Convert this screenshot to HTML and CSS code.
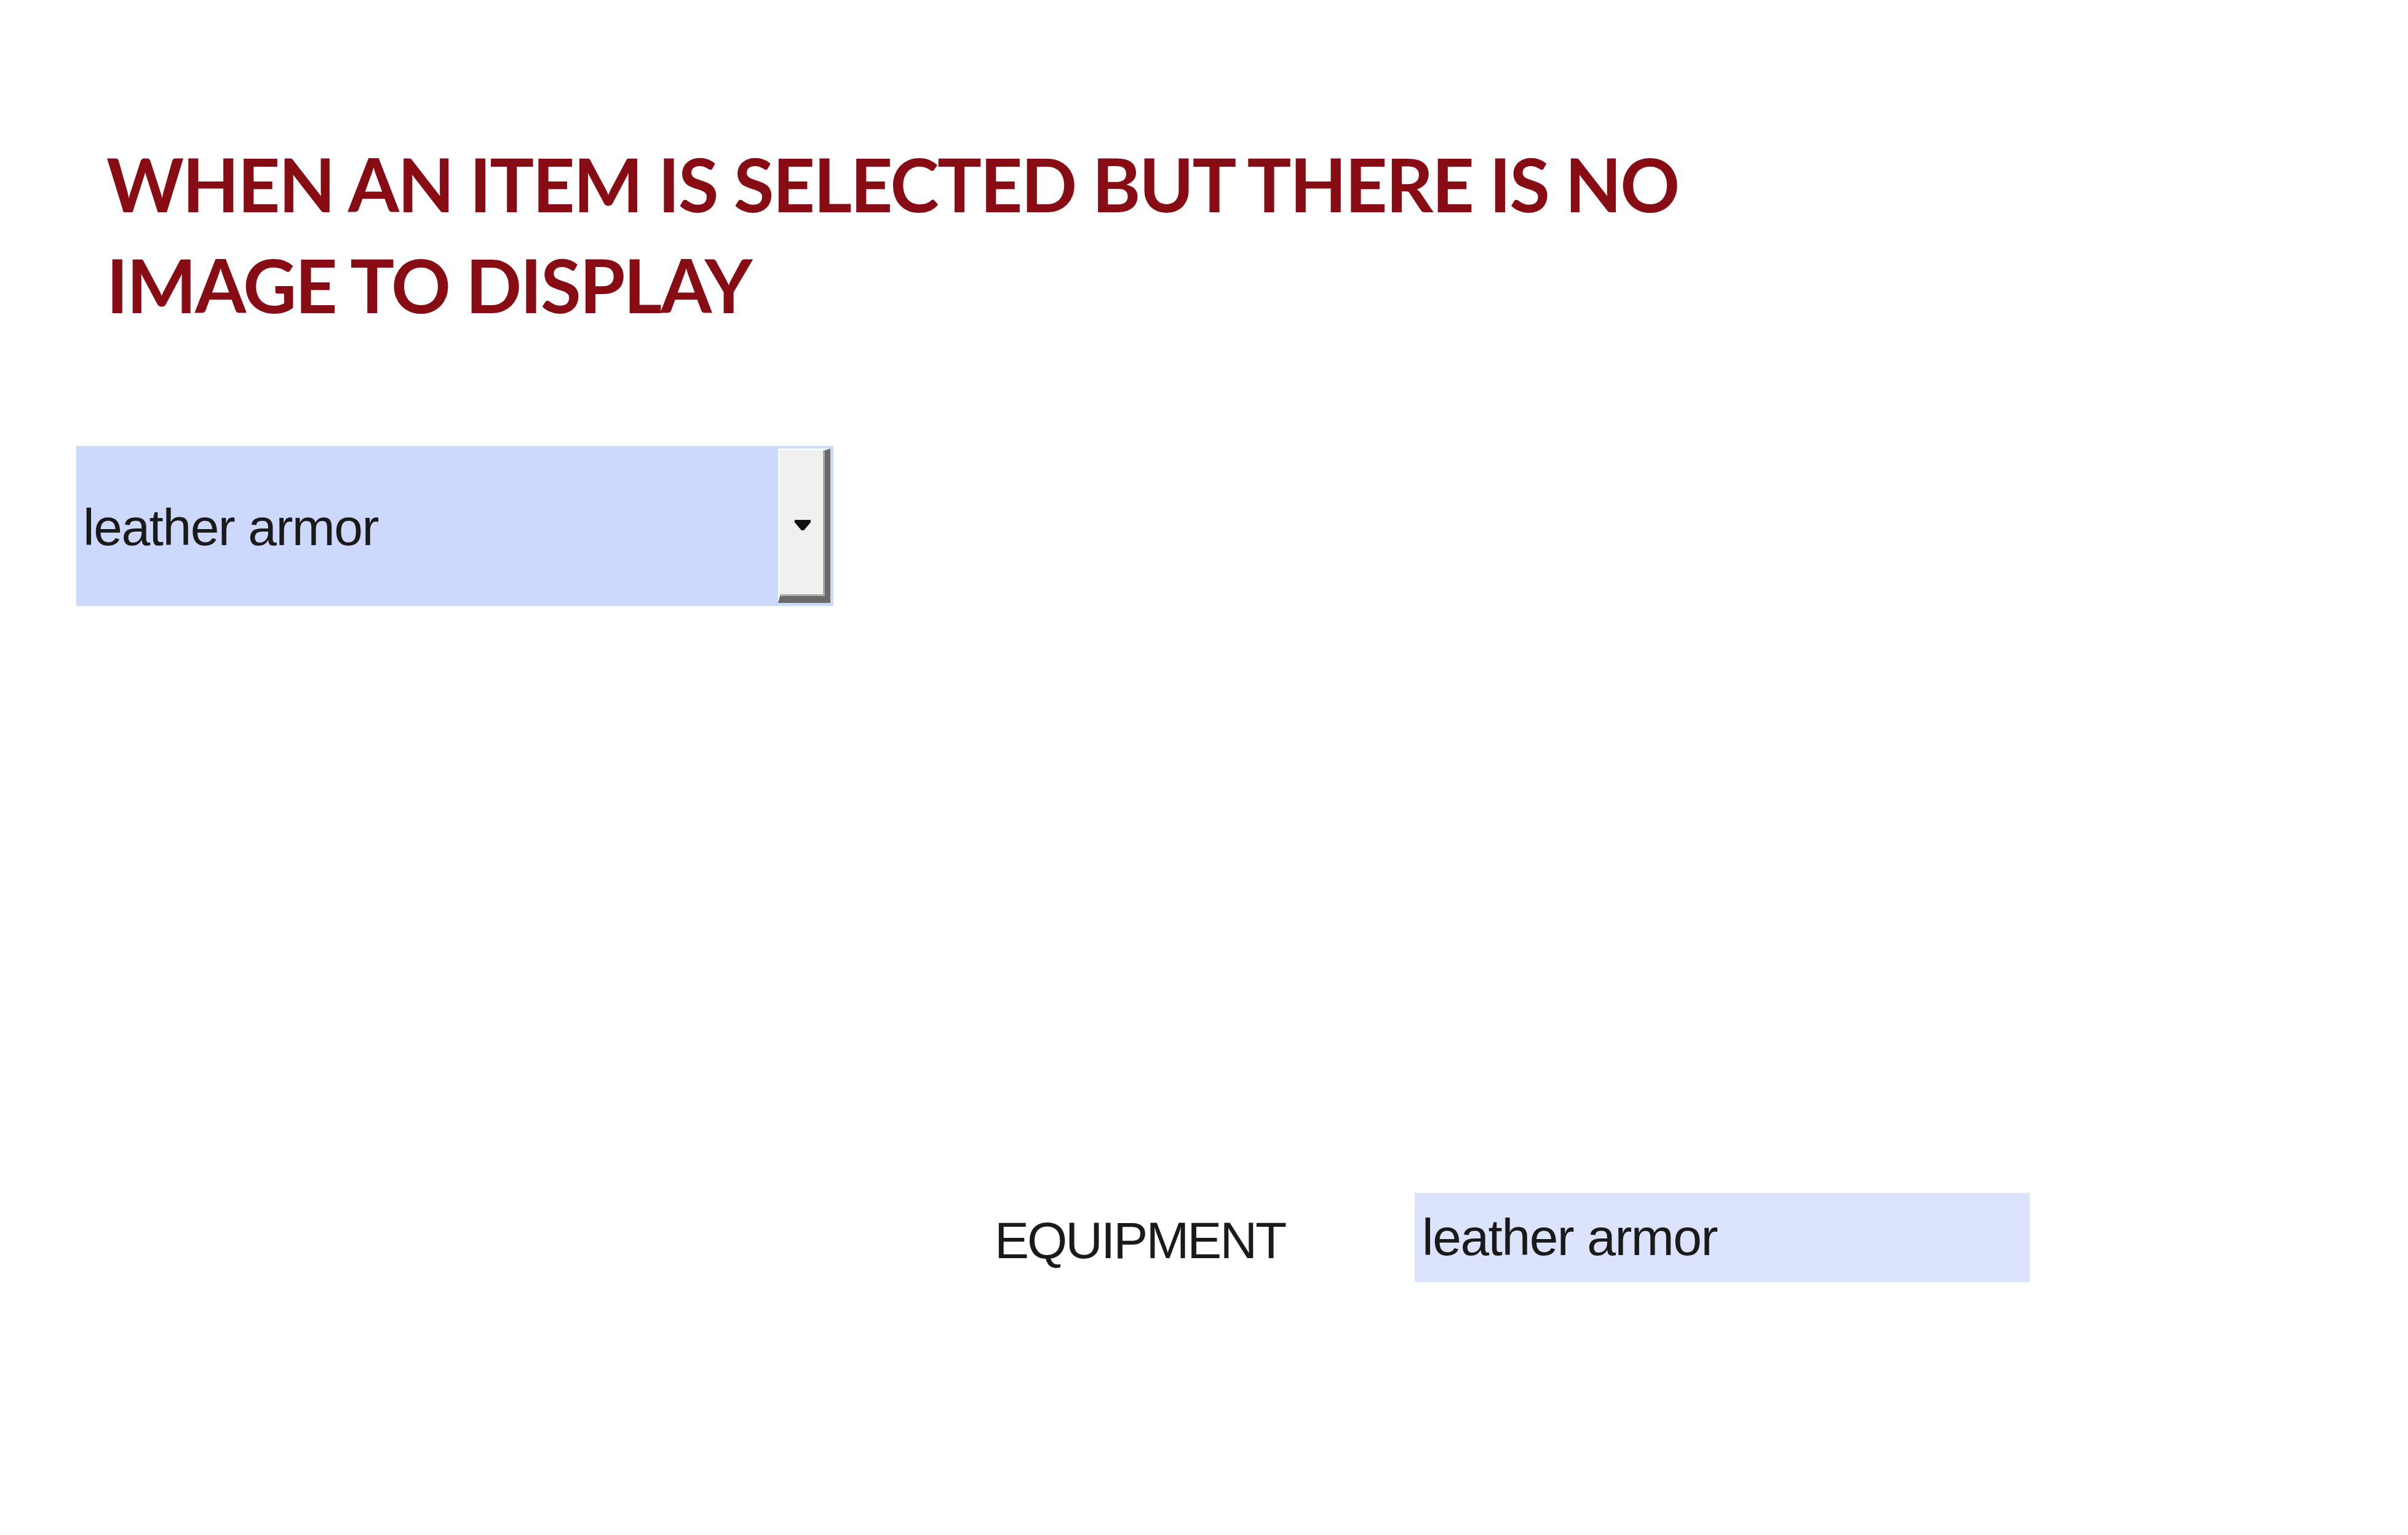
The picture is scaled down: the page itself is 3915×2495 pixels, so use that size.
FILE: index.html
```html
<!DOCTYPE html>
<html lang="en">
<head>
    <meta charset="UTF-8">
    <meta name="viewport" content="width=device-width, initial-scale=1.0">
    <title>No image to display</title>
    <link rel="stylesheet" href="styles.css">
</head>
<body>
    <div class="sheet">
        <!-- Tiêu đề -->
        <h1 class="title">WHEN AN ITEM IS SELECTED BUT THERE IS NO<br>IMAGE TO DISPLAY</h1>

        <!-- Combo box -->
        <div class="combo">
            <span class="combo-text">leather armor</span>
            <div class="combo-button">
                <svg class="combo-arrow" width="26" height="18" viewBox="0 0 26 18">
                    <path d="M0 0 H26 V4 L15 17 H11 L0 4 Z" fill="#111"/>
                </svg>
            </div>
        </div>

        <!-- Ô kết quả -->
        <div class="result-row">
            <span class="result-label">EQUIPMENT</span>
            <div class="result-box">leather armor</div>
        </div>
    </div>
</body>
</html>
```

FILE: styles.css
```css
body {
    margin: 0;
    background: #fff;
    font-family: "Liberation Sans", Arial, sans-serif;
    color: #1a1a1a;
}
.sheet {
    padding: 217px 0 0 124px;
}
.title {
    margin: 0 0 0 49px;
    font-family: Lato, "Open Sans", sans-serif;
    font-weight: 700;
    font-size: 120px;
    line-height: 164px;
    letter-spacing: -2.5px;
    color: #880c14;
}
.combo {
    margin-top: 180px;
    width: 1231px;
    height: 260px;
    background-color: #ccd8fc;
    display: flex;
    align-items: center;
}
.combo-text {
    flex: 1;
    padding: 4px 0 0 11px;
    font-size: 84px;
    letter-spacing: -1.5px;
}
.combo-button {
    align-self: stretch;
    width: 85px;
    margin: 4px 5px 5px 0;
    box-sizing: border-box;
    background-color: #f0f0f0;
    border-top: 3px solid #fdfdfd;
    border-left: 3px solid #fdfdfd;
    border-right: 9px solid #6a6a6a;
    border-bottom: 11px solid #6a6a6a;
    box-shadow: inset -3px -3px 0 #a8a8a8;
    display: flex;
    align-items: center;
    justify-content: center;
    padding-top: 6px;
}
.result-row {
    margin: 954px 0 0 1493px;
    display: flex;
    align-items: center;
}
.result-label {
    width: 683px;
    flex: none;
    padding-top: 10px;
    font-size: 84px;
    letter-spacing: -3px;
}
.result-box {
    width: 1000px;
    height: 145px;
    background-color: #dce3fc;
    display: flex;
    align-items: center;
    padding-left: 12px;
    box-sizing: border-box;
    font-size: 84px;
    letter-spacing: -1.5px;
}
```
